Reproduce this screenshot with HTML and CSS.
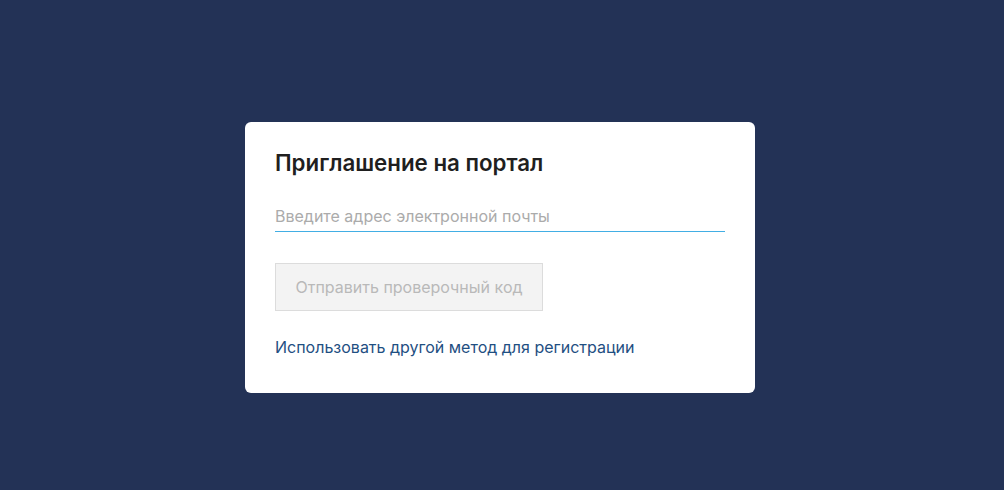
FILE: index.html
```html
<!DOCTYPE html>
<html lang="ru">
<head>
<meta charset="utf-8">
<title>Приглашение на портал</title>
<link rel="stylesheet" href="styles.css">
</head>
<body>
<main class="page">
  <section class="card">
    <h1 class="title">Приглашение на портал</h1>
    <div class="field">
      <input class="input" type="email" placeholder="Введите адрес электронной почты">
      <div class="underline"></div>
    </div>
    <button class="btn" type="button" disabled>Отправить проверочный код</button>
    <a class="link" href="#">Использовать другой метод для регистрации</a>
  </section>
</main>
</body>
</html>
```
FILE: styles.css
```css
html, body {
  margin: 0;
  padding: 0;
  height: 100%;
}
body {
  background: #233256;
  font-family: Inter, "Noto Sans", "Liberation Sans", sans-serif;
}
.page {
  height: 490px;
  display: flex;
  justify-content: center;
  align-items: flex-start;
  padding: 122px 4px 0 0;
  box-sizing: border-box;
}
.card {
  width: 510px;
  height: 271px;
  box-sizing: border-box;
  background: #fff;
  border-radius: 6px;
  padding: 28px 30px 0 30px;
  display: flex;
  flex-direction: column;
  align-items: flex-start;
}
.title {
  margin: 0;
  font-size: 22.3px;
  line-height: 26px;
  font-weight: 600;
  color: #1f1f1f;
  letter-spacing: 0;
}
.field {
  align-self: stretch;
  margin-top: 25px;
}
.input {
  display: block;
  width: 100%;
  box-sizing: border-box;
  border: 0;
  outline: none;
  padding: 0;
  height: 30px;
  font-family: inherit;
  font-size: 16px;
  color: #333;
  background: transparent;
}
.input::placeholder {
  color: #ababab;
}
.underline {
  height: 1px;
  background-color: rgb(66, 174, 228);
}
.btn {
  margin-top: 31px;
  height: 48px;
  width: 268px;
  box-sizing: border-box;
  background: #f3f3f3;
  border: 1px solid #dcdcdc;
  border-radius: 0;
  font-family: inherit;
  font-size: 16px;
  color: #b9b9b9;
  padding: 0 19px;
}
.link {
  margin-top: 26px;
  font-size: 16px;
  line-height: 20px;
  color: #1f4f82;
  text-decoration: none;
}
```
